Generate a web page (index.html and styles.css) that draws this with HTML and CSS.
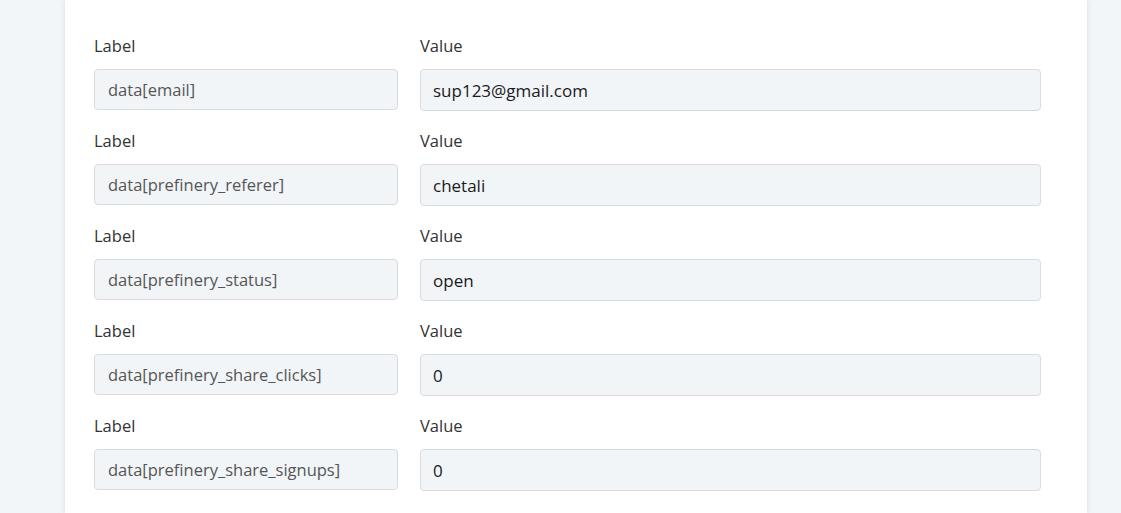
FILE: index.html
```html
<!DOCTYPE html>
<html lang="en">
<head>
    <meta charset="UTF-8">
    <meta name="viewport" content="width=device-width, initial-scale=1.0">
    <title>Webhook Fields</title>
    <link rel="stylesheet" href="styles.css">
</head>
<body>

<div class="card">
    <div class="field-row">
        <div class="col-label">
            <label>Label</label>
            <input class="key" type="text" value="data[email]" readonly>
        </div>
        <div class="col-value">
            <label>Value</label>
            <input class="val" type="text" value="sup123@gmail.com">
        </div>
    </div>

    <div class="field-row">
        <div class="col-label">
            <label>Label</label>
            <input class="key" type="text" value="data[prefinery_referer]" readonly>
        </div>
        <div class="col-value">
            <label>Value</label>
            <input class="val" type="text" value="chetali">
        </div>
    </div>

    <div class="field-row">
        <div class="col-label">
            <label>Label</label>
            <input class="key" type="text" value="data[prefinery_status]" readonly>
        </div>
        <div class="col-value">
            <label>Value</label>
            <input class="val" type="text" value="open">
        </div>
    </div>

    <div class="field-row">
        <div class="col-label">
            <label>Label</label>
            <input class="key" type="text" value="data[prefinery_share_clicks]" readonly>
        </div>
        <div class="col-value">
            <label>Value</label>
            <input class="val" type="text" value="0">
        </div>
    </div>

    <div class="field-row">
        <div class="col-label">
            <label>Label</label>
            <input class="key" type="text" value="data[prefinery_share_signups]" readonly>
        </div>
        <div class="col-value">
            <label>Value</label>
            <input class="val" type="text" value="0">
        </div>
    </div>
</div>

</body>
</html>
```

FILE: styles.css
```css
body {
    margin: 0;
    background-color: #f3f6f9;
    font-family: "Open Sans", "Liberation Sans", sans-serif;
    color: #333;
}
.card {
    width: 1022px;
    margin-left: 65px;
    box-sizing: border-box;
    padding: 36px 29px 0;
    min-height: 513px;
    background-color: #fff;
    box-shadow: 0 0 6px rgba(160, 175, 190, 0.35);
}
.field-row {
    display: flex;
    gap: 22px;
    margin-bottom: 20px;
}
.col-label {
    width: 304px;
}
.col-value {
    width: 621px;
}
label {
    display: block;
    font-size: 16.5px;
    line-height: 20px;
    margin-bottom: 13px;
}
input {
    display: block;
    width: 100%;
    box-sizing: border-box;
    background-color: #f2f5f8;
    border: 1px solid #d6dce1;
    border-radius: 4px;
    padding: 0 13px;
    outline: none;
}
input.key {
    height: 41px;
    font-family: "Open Sans", sans-serif;
    font-size: 16.5px;
    color: #555;
}
input.val {
    height: 42px;
    font-family: "Open Sans", sans-serif;
    font-size: 17px;
    color: #1a1a1a;
    padding-left: 12px;
}
```
